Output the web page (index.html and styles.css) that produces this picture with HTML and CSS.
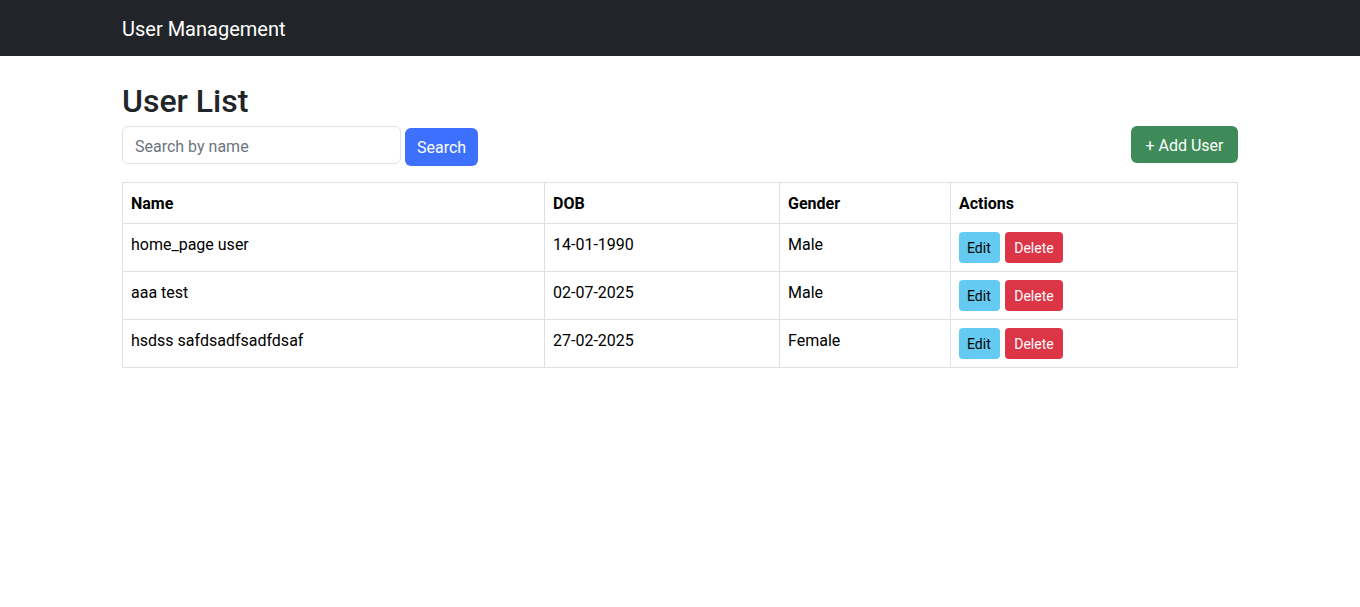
FILE: index.html
```html
<!DOCTYPE html>
<html lang="en">
<head>
<meta charset="utf-8">
<title>User Management</title>
<link rel="stylesheet" href="styles.css">
</head>
<body>
<nav class="navbar">
  <div class="container">
    <span class="brand">User Management</span>
  </div>
</nav>
<main class="container">
  <h2 class="title">User List</h2>
  <div class="toolbar">
    <form class="search">
      <input class="search-input" type="text" placeholder="Search by name">
      <button class="btn btn-primary" type="button">Search</button>
    </form>
    <button class="btn btn-success" type="button">+ Add User</button>
  </div>
  <table class="users">
    <colgroup>
      <col class="c-name"><col class="c-dob"><col class="c-gender"><col class="c-actions">
    </colgroup>
    <thead>
      <tr><th>Name</th><th>DOB</th><th>Gender</th><th>Actions</th></tr>
    </thead>
    <tbody>
      <tr><td>home_page user</td><td>14-01-1990</td><td>Male</td><td><div class="actions"><button class="btn-sm btn-info">Edit</button><button class="btn-sm btn-danger">Delete</button></div></td></tr>
      <tr><td>aaa test</td><td>02-07-2025</td><td>Male</td><td><div class="actions"><button class="btn-sm btn-info">Edit</button><button class="btn-sm btn-danger">Delete</button></div></td></tr>
      <tr><td>hsdss safdsadfsadfdsaf</td><td>27-02-2025</td><td>Female</td><td><div class="actions"><button class="btn-sm btn-info">Edit</button><button class="btn-sm btn-danger">Delete</button></div></td></tr>
    </tbody>
  </table>
</main>
</body>
</html>
```
FILE: styles.css
```css
* { box-sizing: border-box; }
body {
  margin: 0;
  font-family: Roboto, "Noto Sans", sans-serif;
  font-size: 16px;
  line-height: 1.5;
  color: #212529;
  background: #fff;
}
.container {
  width: 1140px;
  margin: 0 auto;
  padding: 0 12px;
}
.navbar {
  background: #212529;
  height: 56px;
  display: flex;
  align-items: center;
}
.brand {
  color: #fff;
  font-size: 20px;
  line-height: 30px;
  display: block;
  padding-top: 2px;
}
.title {
  margin: 26px 0 6px;
  font-size: 32px;
  font-weight: 500;
  line-height: 1.2;
}
.toolbar {
  display: flex;
  justify-content: space-between;
  align-items: flex-start;
  margin-bottom: 16px;
}
.search {
  display: flex;
  gap: 4px;
  align-items: flex-start;
  margin: 0;
}
.search-input {
  width: 279px;
  height: 38px;
  border: 1px solid #dee2e6;
  border-radius: 6px;
  padding: 7px 12px 5px;
  font: inherit;
  color: #212529;
}
.search-input::placeholder { color: #6c757d; }
.btn {
  font: inherit;
  height: 38px;
  padding: 7px 11px 5px;
  border: 1px solid transparent;
  border-radius: 6px;
  color: #fff;
  line-height: 24px;
}
.btn-primary { background: #3d70fd; margin-top: 2px; }
.btn-success { background: #3e8a58; height: 37px; padding: 7px 13.5px 4px; }
.users {
  width: 1115px;
  border-collapse: collapse;
  table-layout: fixed;
  color: #000;
}
.c-name { width: 422px; }
.c-dob { width: 235px; }
.c-gender { width: 171px; }
.c-actions { width: 287px; }
.users th, .users td {
  border: 1px solid #dee2e6;
  padding: 9px 8px 7px;
  text-align: left;
  vertical-align: top;
}
.users td:last-child { padding-top: 8px; padding-bottom: 8px; }
.users th { font-weight: 700; }
.users td { height: 48px; }
.actions { display: flex; gap: 5px; }
.btn-sm {
  font: inherit;
  font-size: 14px;
  line-height: 21px;
  height: 31px;
  padding: 5px 8px 3px;
  border: 1px solid transparent;
  border-radius: 4px;
}
.btn-info { background: #64caf2; color: #000; padding-left: 7px; padding-right: 8px; }
.btn-danger { background: #dc3545; color: #fff; padding-left: 8.5px; padding-right: 8.5px; }
```
